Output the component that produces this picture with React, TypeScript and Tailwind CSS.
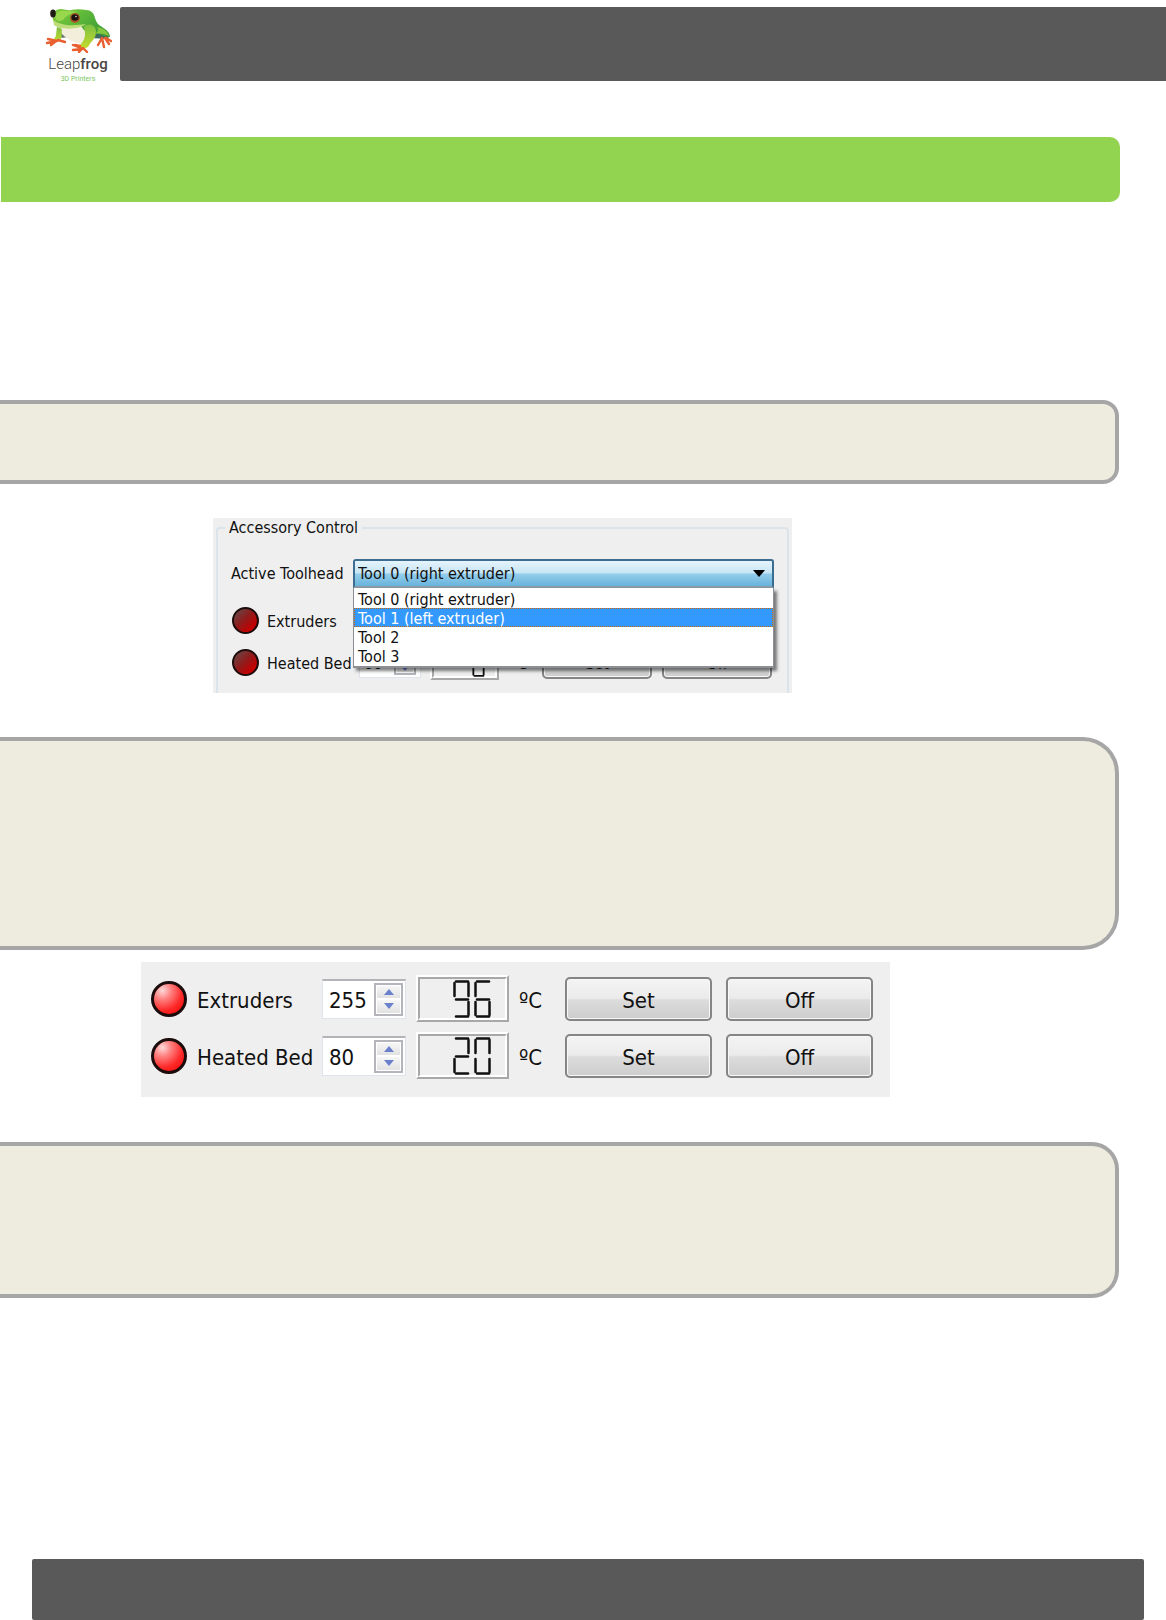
import { useState } from "react";
import clsx from "clsx";

const TOOLS = [
  "Tool 0 (right extruder)",
  "Tool 1 (left extruder)",
  "Tool 2",
  "Tool 3",
];

// seven segment strokes on a 17 x 38 grid
const SEGMENTS: Record<string, string> = {
  a: "M3 1.5H15",
  b: "M15.5 3V16",
  c: "M15.5 22V35",
  d: "M3 36.5H15",
  e: "M1.5 22V35",
  f: "M1.5 3V16",
  g: "M3 19.5H15",
};

const DIGITS: Record<string, string> = {
  "0": "abcdef",
  "2": "abged",
  "6": "afgedc",
  "9": "abfgcd",
};

const Frog = () => (
  <svg viewBox="0 0 68 46" className="h-[46px] w-[68px] shrink-0" aria-hidden="true">
    <defs>
      <linearGradient id="frog-back" x1="0" y1="0" x2="1" y2="0.6">
        <stop offset="0" stopColor="#86cc3e" />
        <stop offset="0.5" stopColor="#5db83a" />
        <stop offset="1" stopColor="#3c9a35" />
      </linearGradient>
      <linearGradient id="frog-leg" x1="0" y1="0" x2="0" y2="1">
        <stop offset="0" stopColor="#7cc142" />
        <stop offset="1" stopColor="#c9dc2c" />
      </linearGradient>
    </defs>
    <path d="M15 24c4 0 9 2 13 6l-13 1z" fill="#60756c" />
    <path d="M48 24l17 5-1 3-18-1z" fill="#3d6b60" />
    <path d="M13 18c10 2 20 1 30 2l5 8-7 10c-9-2-20-5-26-15z" fill="#f3eedb" />
    <path d="M13 20l5 2c-1 4 1 8-2 11l-6 3-1-3c4-3 3-8 4-13z" fill="url(#frog-leg)" />
    <path
      d="M9 13C8 7 10 2 17 2c4 0 7 2 10 1 5-1 10-1 15 0 5 0 8 3 9 8 1 4 3 7 7 9 5 3 8 6 8 10-6 0-11-4-18-4-5 0-8-2-11-7-8 2-23 3-28-6z"
      fill="url(#frog-back)"
    />
    <path d="M11 9c2-5 6-6 11-5 5 0 8 0 12 1-8 1-12 4-15 8-4 2-8 1-8-4z" fill="#99d84c" />
    <path d="M9 13c8 6 20 6 33 4-6 6-27 6-32 1z" fill="#bddd79" />
    <path d="M40 20c5-5 12-2 12 5 0 7-5 9-8 15l-7 3-3-3c5-4 9-10 6-20z" fill="url(#frog-leg)" />
    <path d="M53 20c6 1 11 4 12 9-4-2-9-3-15-2 4-2 5-4 3-7z" fill="#85c740" />
    <g stroke="#e95f30" strokeWidth="2.400" strokeLinecap="round" strokeLinejoin="round" fill="none">
      <path d="M13 34L3 36M12 34l-5 4M13 34l-9-2M14 33l7 2" />
      <path d="M37 41l-8-3M37 42l-8 1M38 42l-3 3M39 41l4 4M36 39l-5-1" />
      <path d="M58 31l-4 7M58 31l2 9M61 31l4 6M62 31l5 3" />
    </g>
    <ellipse cx="9" cy="6.500" rx="2.800" ry="4" fill="#211b16" />
    <circle cx="31" cy="11" r="5" fill="#a85a26" />
    <ellipse cx="31" cy="10.500" rx="3.600" ry="3.200" fill="#1d1411" />
    <circle cx="32" cy="9.500" r="0.800" fill="#e8ddd0" />
  </svg>
);

const Logo = () => (
  <div className="flex w-[68px] flex-col items-center font-[Roboto,sans-serif]">
    <Frog />
    <div className="mt-[2px] text-[15px] leading-[19px] text-[#4a4543]">
      <span className="font-light">Leap</span>
      <span className="font-medium">frog</span>
    </div>
    <div className="text-[7px] leading-[11px] text-[#7cc65a]">3D Printers</div>
  </div>
);

const Callout = ({ className }: { className: string }) => (
  <section
    className={clsx(
      "mr-[47px] border-4 border-l-0 border-[#a6a6a6] bg-[#eeebdf]",
      className
    )}
  />
);

const Led = ({ on, small }: { on: boolean; small?: boolean }) => (
  <span
    className={clsx(
      "shrink-0 rounded-full border-[#1c0c0c]",
      small ? "size-[27px] border-2" : "size-9 border-3",
      on
        ? "bg-[radial-gradient(circle_at_28%_22%,#ffd9d9_0%,#ff8080_28%,#ff2a2a_62%,#f00000_100%)]"
        : "bg-[linear-gradient(135deg,#6b4444_10%,#8f1c1c_45%,#c40000_80%)]"
    )}
  />
);

const Lcd = ({ value, small }: { value: string; small?: boolean }) => (
  <output
    aria-label={value}
    className={clsx(
      "block shrink-0 border-2 border-t-white border-r-[#a8a8a8] border-b-[#a8a8a8] border-l-white",
      small ? "ml-[9px] h-[35px] w-[69px]" : "ml-[10px] h-[47px] w-[93px]"
    )}
  >
    <span
      className={clsx(
        "flex h-full items-center justify-end border-2 border-t-[#a8a8a8] border-r-white border-b-white border-l-[#a8a8a8]",
        small ? "gap-[3px] pr-[10px]" : "gap-1 pr-[14px]"
      )}
    >
      {value.split("").map((digit, i) => (
        <svg
          key={i}
          viewBox="0 0 17 38"
          className={small ? "h-7 w-[13px]" : "h-[38px] w-[17px]"}
          stroke="#111"
          strokeWidth="2.500"
          strokeLinecap="round"
          fill="none"
        >
          {DIGITS[digit].split("").map((s) => (
            <path key={s} d={SEGMENTS[s]} />
          ))}
        </svg>
      ))}
    </span>
  </output>
);

const StepButton = ({ up, onClick }: { up?: boolean; onClick: () => void }) => (
  <button
    type="button"
    aria-label={up ? "Increase" : "Decrease"}
    onClick={onClick}
    className="flex flex-1 items-center justify-center border border-white bg-gradient-to-b from-[#f6f6f6] to-[#e2e2e2]"
  >
    <svg viewBox="0 0 10 6" className="h-[6px] w-[10px]" fill="#6a80cc">
      <path d={up ? "M5 0l5 6H0z" : "M0 0h10L5 6z"} />
    </svg>
  </button>
);

const PushButton = ({ label, small }: { label: string; small?: boolean }) => (
  <button
    type="button"
    className={clsx(
      "shrink-0 rounded-[5px] border-2 border-[#858585] bg-[linear-gradient(#f4f4f4_0%,#ebebeb_48%,#dcdcdc_52%,#cdcdcd_100%)] shadow-[inset_0_0_0_1px_#f8f8f8]",
      small ? "h-8 w-[110px] pt-[2px]" : "h-11 w-[147px] pt-1"
    )}
  >
    {label}
  </button>
);

type HeaterRowProps = {
  id: string;
  label: string;
  target: number;
  current: string;
  on: boolean;
  small?: boolean;
};

const HeaterRow = ({ id, label, target, current, on, small }: HeaterRowProps) => {
  const [value, setValue] = useState(target);

  return (
    <div className="flex items-center">
      <Led on={on} small={small} />
      <label
        htmlFor={id}
        className={clsx(
          "shrink-0 whitespace-nowrap",
          small ? "ml-2 w-[92px] pt-[2px]" : "ml-[10px] w-[125px] pt-1"
        )}
      >
        {label}
      </label>
      <div
        className={clsx(
          "flex shrink-0 items-center border border-t-2 border-[#dfe3ee] border-t-[#b4b4b8] bg-white",
          small ? "h-[31px] w-[62px] px-1" : "h-10 w-[84px] pr-[2px] pl-[6px]"
        )}
      >
        <input
          id={id}
          type="text"
          inputMode="numeric"
          value={value}
          onChange={(e) => setValue(Number(e.target.value) || 0)}
          className="w-full min-w-0 flex-1 bg-transparent pt-[2px] outline-none"
        />
        <div
          className={clsx(
            "flex shrink-0 flex-col divide-y-2 divide-[#b4b4bc] border-2 border-[#b4b4bc]",
            small ? "h-6 w-[22px]" : "h-[33px] w-[29px]"
          )}
        >
          <StepButton up onClick={() => setValue(value + 1)} />
          <StepButton onClick={() => setValue(value - 1)} />
        </div>
      </div>
      <Lcd value={current} small={small} />
      <span className={clsx("shrink-0", small ? "w-[43px] pt-[2px] pl-3" : "w-14 pt-1 pl-[10px]")}>
        ºC
      </span>
      <div className={clsx("flex", small ? "gap-[10px]" : "gap-[14px]")}>
        <PushButton label="Set" small={small} />
        <PushButton label="Off" small={small} />
      </div>
    </div>
  );
};

const AccessoryControl = () => {
  const [tool, setTool] = useState(TOOLS[0]);

  return (
    <section className="ml-[213px] max-w-[579px] overflow-hidden bg-[#efefef] px-[3px] text-[16px]">
      <fieldset className="rounded-t-[4px] border-2 border-b-0 border-[#dbe4ea] pr-[13px] pb-[13px] pl-[13px]">
        <legend className="-ml-[6px] px-1 leading-[20px]">Accessory Control</legend>
        <div className="mt-[21px] flex items-center">
          <label htmlFor="toolhead" className="w-[122px] shrink-0 whitespace-nowrap">
            Active Toolhead
          </label>
          <div className="relative flex-1">
            <select
              id="toolhead"
              value={tool}
              onChange={(e) => setTool(e.target.value)}
              className="block h-[29px] w-full appearance-none rounded-t-[3px] border-2 border-[#3c6c90] border-b-[#8c98a4] bg-[linear-gradient(#e6f4fc_0%,#c6e5f5_48%,#94cdeb_52%,#68b3db_100%)] pl-[3px] outline-none"
            >
              {TOOLS.map((name) => (
                <option key={name}>{name}</option>
              ))}
            </select>
            <svg
              viewBox="0 0 12 7"
              className="pointer-events-none absolute top-[11px] right-[9px] h-[7px] w-3"
            >
              <path d="M0 0h12L6 7z" />
            </svg>
            <ul
              role="listbox"
              aria-label="Active Toolhead"
              className="absolute top-full right-0 left-0 z-10 border border-t-0 border-b-2 border-[#8c8f94] bg-white py-px shadow-[3px_3px_3px_rgba(0,0,0,0.5)]"
            >
              {TOOLS.map((name, i) => (
                <li
                  key={name}
                  role="option"
                  aria-selected={i === 1}
                  onClick={() => setTool(name)}
                  className={clsx(
                    "h-[19px] pl-1 leading-[21px]",
                    i === 1 &&
                      "bg-[#3399ff] text-white outline-1 -outline-offset-1 outline-dotted outline-[#cc6600]"
                  )}
                >
                  {name}
                </li>
              ))}
            </ul>
          </div>
        </div>
        <div className="mt-[15px] ml-px flex flex-col gap-[7px]">
          <HeaterRow id="menu-extruder" label="Extruders" target={255} current="0" on={false} small />
          <HeaterRow id="menu-bed" label="Heated Bed" target={80} current="0" on={false} small />
        </div>
      </fieldset>
    </section>
  );
};

export default function App() {
  return (
    <main className="flex min-h-screen flex-col bg-white font-['DejaVu_Sans_Condensed','Noto_Sans',sans-serif] text-[#111]">
      <header className="flex h-[82px] pt-[7px] pl-11">
        <Logo />
        <div className="ml-2 h-[74px] flex-1 rounded-l-[2px] bg-[#595959]" />
      </header>

      <div className="mt-[55px] mr-[46px] ml-px h-[65px] rounded-r-[10px] bg-[#92d450]" />

      <Callout className="mt-[198px] h-[84px] rounded-r-[16px]" />

      <div className="mt-[34px]">
        <AccessoryControl />
      </div>

      <Callout className="mt-11 h-[213px] rounded-r-[36px]" />

      <section className="mt-3 ml-[141px] flex max-w-[749px] flex-col gap-[10px] bg-[#efefef] pt-[13px] pr-[17px] pb-[18px] pl-[10px] text-[22px]">
        <HeaterRow id="extruder" label="Extruders" target={255} current="96" on />
        <HeaterRow id="bed" label="Heated Bed" target={80} current="20" on />
      </section>

      <Callout className="mt-[45px] h-[156px] rounded-r-[27px]" />

      <footer className="mt-auto mr-[22px] ml-8 h-[61px] rounded-[2px] bg-[#595959]" />
    </main>
  );
}
